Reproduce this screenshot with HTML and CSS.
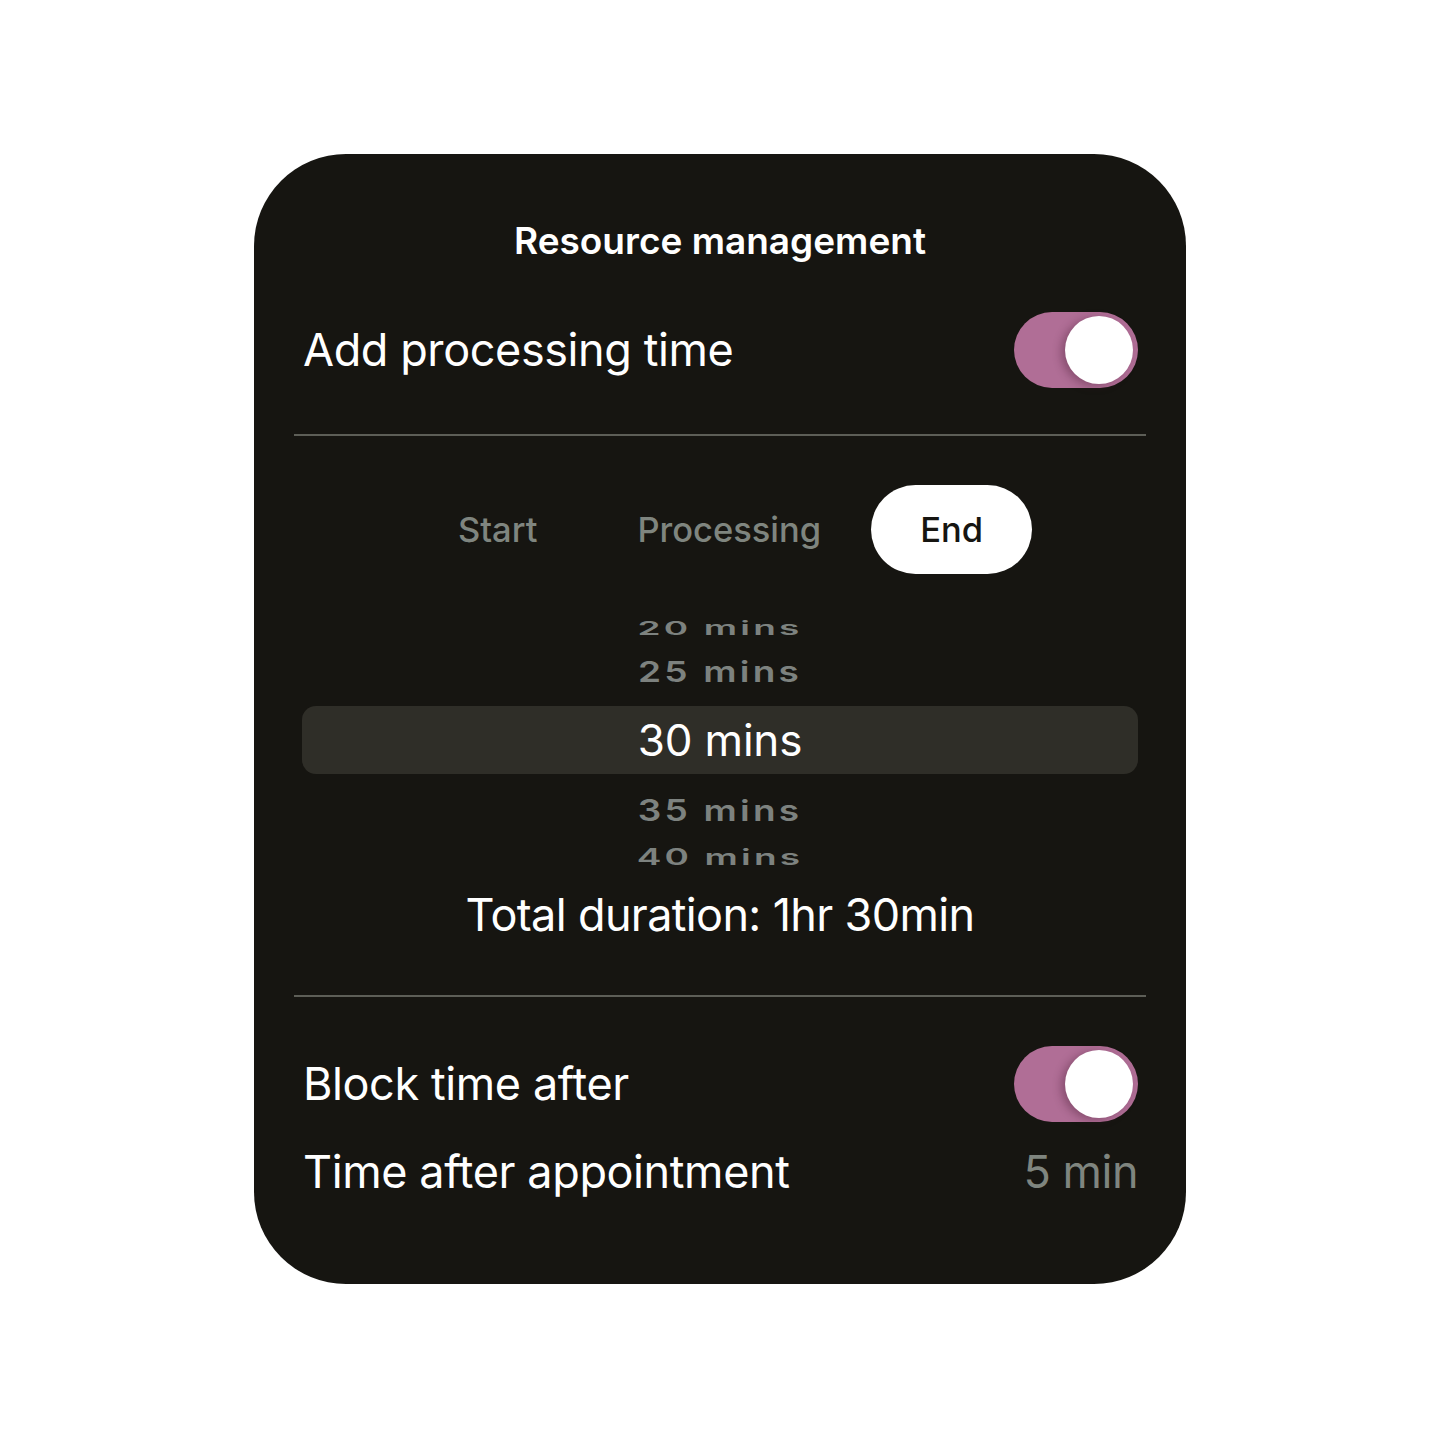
FILE: index.html
```html
<!DOCTYPE html>
<html lang="en">
<head>
<meta charset="utf-8">
<title>Resource management</title>
<link rel="stylesheet" href="styles.css">
</head>
<body>
<div class="card">
  <h1 class="title">Resource management</h1>
  <div class="row row-toggle">
    <span class="label">Add processing time</span>
    <span class="toggle"><span class="knob"></span></span>
  </div>
  <div class="divider"></div>
  <div class="tabs">
    <span class="tab">Start</span>
    <span class="tab">Processing</span>
    <span class="tab active">End</span>
  </div>
  <div class="picker">
    <div class="item far top-far"><span>20 mins</span></div>
    <div class="item near top-near"><span>25 mins</span></div>
    <div class="item selected"><span>30 mins</span></div>
    <div class="item near bottom-near"><span>35 mins</span></div>
    <div class="item far bottom-far"><span>40 mins</span></div>
  </div>
  <div class="total">Total duration: 1hr 30min</div>
  <div class="divider divider-2"></div>
  <div class="row row-toggle row-block">
    <span class="label">Block time after</span>
    <span class="toggle"><span class="knob"></span></span>
  </div>
  <div class="row row-value">
    <span class="label">Time after appointment</span>
    <span class="value">5 min</span>
  </div>
</div>
</body>
</html>
```
FILE: styles.css
```css
* { box-sizing: border-box; }
html, body { margin: 0; padding: 0; background: #ffffff; }
body {
  font-family: Inter, "Noto Sans", "Liberation Sans", sans-serif;
  display: flex;
  justify-content: center;
  padding-top: 154px;
}
.card {
  width: 932px;
  height: 1130px;
  background: #161511;
  border-radius: 92px;
  padding: 65px 40px 0;
  display: flex;
  flex-direction: column;
  color: #ffffff;
}
.title {
  margin: 0;
  font-size: 37px;
  font-weight: 600;
  line-height: 44px;
  text-align: center;
  letter-spacing: 0;
}
.row {
  display: flex;
  align-items: center;
  justify-content: space-between;
  padding: 0 8px 0 9px;
}
.row-toggle { height: 76px; margin-top: 49px; }
.label {
  font-size: 45px;
  letter-spacing: -0.4px;
  line-height: 56px;
}
.toggle {
  width: 124px;
  height: 76px;
  border-radius: 38px;
  background: #b06e96;
  position: relative;
}
.knob {
  position: absolute;
  top: 4px;
  right: 5px;
  width: 68px;
  height: 68px;
  border-radius: 50%;
  background: #ffffff;
  box-shadow: -4px 2px 8px rgba(60, 20, 40, 0.35);
}
.divider {
  height: 2px;
  background: #5d5e57;
  margin-top: 46px;
}
.tabs {
  display: flex;
  justify-content: center;
  margin-top: 49px;
  height: 89px;
}
.tab {
  display: flex;
  align-items: center;
  padding: 0 50px;
  height: 89px;
  border-radius: 45px;
  font-size: 34.5px;
  font-weight: 500;
  color: #7f857f;
  letter-spacing: 0;
}
.tab.active {
  background: #ffffff;
  color: #161511;
  padding: 0 49px;
}
.picker {
  display: flex;
  flex-direction: column;
  margin-top: 34px;
}
.item {
  display: flex;
  justify-content: center;
  align-items: center;
  color: #7d827f;
  font-weight: 600;
}
.item span { display: inline-block; }
.far { height: 40px; font-size: 37px; letter-spacing: 3.2px; }
.near { height: 46px; font-size: 37px; letter-spacing: 3.2px; }
.top-far span { transform: scaleY(0.5); }
.top-near span { transform: scaleY(0.78); }
.bottom-near span { transform: scaleY(0.8); }
.bottom-far span { transform: scaleY(0.6); }
.bottom-near { height: 48px; margin-top: 12px; }
.bottom-far { height: 44px; }
.selected {
  height: 68px;
  margin: 12px 8px 0;
  border-radius: 14px;
  background: #2f2e28;
  color: #ffffff;
  font-size: 44px;
  font-weight: 400;
  letter-spacing: -0.2px;
}
.total {
  margin-top: 9px;
  text-align: center;
  font-size: 45px;
  line-height: 56px;
  letter-spacing: -0.65px;
}
.divider-2 { margin-top: 52px; }
.row-block { margin-top: 49px; }
.row-value { height: 56px; margin-top: 22px; }
.value {
  font-size: 45px;
  line-height: 56px;
  color: #7f857f;
  letter-spacing: -0.5px;
}
```
